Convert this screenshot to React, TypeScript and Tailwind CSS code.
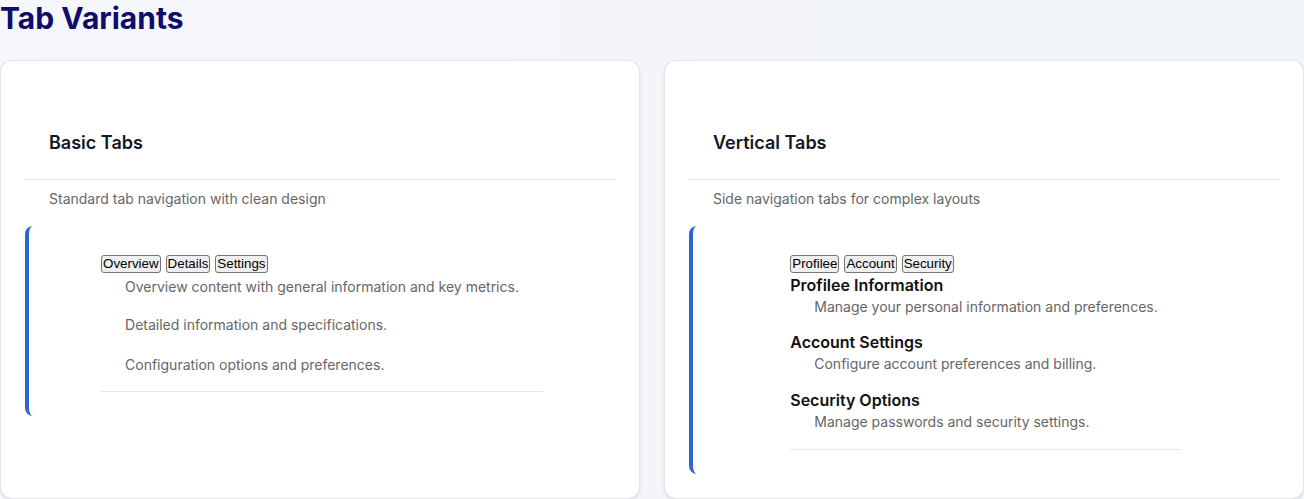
import React from "react";

function TabButtons({ labels }: { labels: string[] }) {
  return (
    <div className="flex gap-[5px]">
      {labels.map((l) => (
        <button
          key={l}
          className="h-[18px] rounded-[3px] border border-[#767676] bg-[#efefef] px-px font-['Liberation_Sans',Arial,sans-serif] text-[13.33px] leading-[16px] text-black"
        >
          {l}
        </button>
      ))}
    </div>
  );
}

function Card({ title, description, children }: { title: string; description: string; children: React.ReactNode }) {
  return (
    <div className="rounded-xl border border-[#e5e7eb] bg-white p-6 shadow-sm">
      <div className="border-b border-[#e5e7eb] px-6 pb-6 pt-[46px]">
        <h2 className="text-lg font-semibold leading-6 text-[#111827]">{title}</h2>
      </div>
      <p className="mb-[17px] mt-[9px] px-6 text-sm leading-5 text-[#666]">{description}</p>
      <div className="flex justify-center rounded-l-lg border-l-4 border-[#2f64d2] pb-6 pt-[29px]">
        <div className="w-fit">{children}</div>
      </div>
    </div>
  );
}

export default function App() {
  return (
    <div className="min-h-screen bg-gradient-to-r from-[#f6f7fb] to-[#f1f4f8] font-['Inter',sans-serif]">
      <h1 className="mb-6 text-3xl font-bold leading-9 text-[#0d0d6b]">Tab Variants</h1>
      <div className="grid grid-cols-2 gap-6">
        <Card title="Basic Tabs" description="Standard tab navigation with clean design">
          <TabButtons labels={["Overview", "Details", "Settings"]} />
          <div className="pb-4 pt-1 text-sm leading-5 text-[#666]">
            <p className="px-6">Overview content with general information and key metrics.</p>
            <p className="mt-[18px] px-6">Detailed information and specifications.</p>
            <p className="mt-5 px-6">Configuration options and preferences.</p>
          </div>
          <div className="border-t border-[#e5e7eb]" />
        </Card>
        <Card title="Vertical Tabs" description="Side navigation tabs for complex layouts">
          <TabButtons labels={["Profilee", "Account", "Security"]} />
          <div className="pb-[17px]">
            <h3 className="text-base font-semibold leading-6 text-[#111]">Profilee Information</h3>
            <p className="px-6 text-sm leading-5 text-[#666]">Manage your personal information and preferences.</p>
            <h3 className="mt-[13px] text-base font-semibold leading-6 text-[#111]">Account Settings</h3>
            <p className="px-6 text-sm leading-5 text-[#666]">Configure account preferences and billing.</p>
            <h3 className="mt-[14px] text-base font-semibold leading-6 text-[#111]">Security Options</h3>
            <p className="px-6 text-sm leading-5 text-[#666]">Manage passwords and security settings.</p>
          </div>
          <div className="border-t border-[#e5e7eb]" />
        </Card>
      </div>
    </div>
  );
}
